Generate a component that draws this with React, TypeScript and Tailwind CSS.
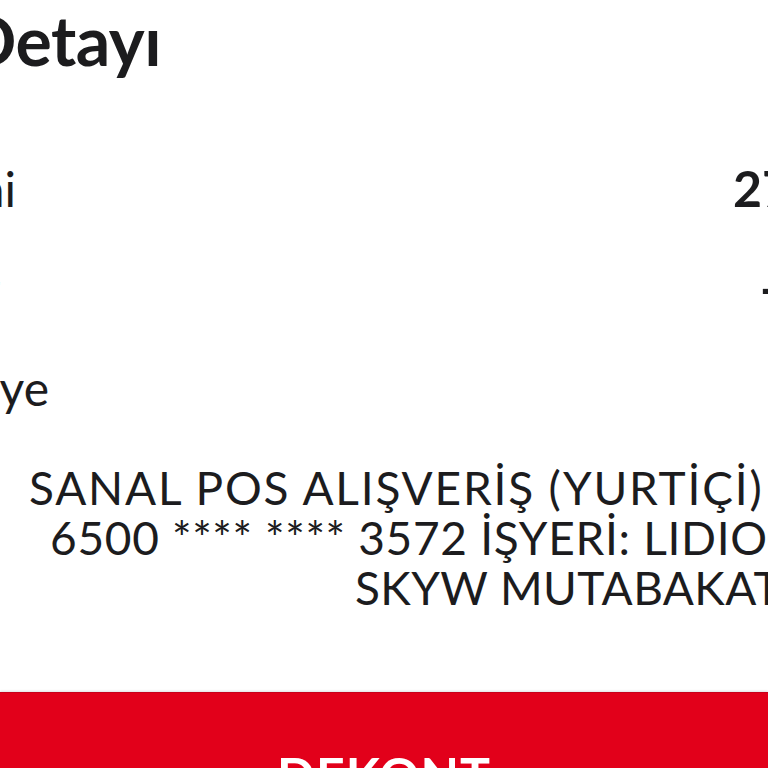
const ROWS = [
    { label: "İşlem Tarihi", value: "27.05.2024", labelBox: "w-[16px]", valueBox: "ml-[717px]" },
    { label: "Tutar", value: "-1.250,00 TL", labelBox: "w-0", valueBox: "ml-[760px]" },
    { label: "Harcama Türü: Hediye", value: "", labelBox: "w-[49px]", valueBox: "ml-auto" },
];

export default function App() {
    return (
        <div className="w-[768px] h-[768px] overflow-hidden bg-white text-[#1c1c1e] font-['Lato',sans-serif] flex flex-col">
            <div className="w-[161px] h-[80px] flex justify-end whitespace-nowrap">
                <h1 className="text-[68px] leading-[80px] font-bold tracking-[-0.5px]">İşlem Detayı</h1>
            </div>

            <div className="mt-[58px] flex flex-col">
                {ROWS.map((row) => (
                    <div key={row.label} className="h-[100px] flex items-baseline whitespace-nowrap leading-[100px]">
                        <div className={`${row.labelBox} shrink-0 flex justify-end`}>
                            <span className="text-[48px]">{row.label}</span>
                        </div>
                        <span className={`${row.valueBox} text-[50px] font-bold`}>{row.value}</span>
                    </div>
                ))}
            </div>

            <div className="mt-[25px] flex flex-col text-[46px] leading-[50px] whitespace-nowrap">
                <p className="pl-[29px] tracking-[1.8px]">SANAL POS ALIŞVERİŞ (YURTİÇİ)</p>
                <p className="pl-[50px] tracking-[0.7px]">
                    6500 <span className="tracking-[0.6px]">****</span> <span className="tracking-[0.6px]">****</span> 3572 İŞYERİ: LIDIO*YEMEKSEPETI
                </p>
                <p className="pl-[355px] tracking-[0.4px]">SKYW MUTABAKATI</p>
            </div>

            <button className="mt-[79px] h-[120px] shrink-0 bg-[#e2001a] border-t border-[#c8001a] shadow-[0_-1px_2px_rgba(0,0,0,0.12)] flex justify-center pt-[52px]">
                <span className="text-[50px] leading-[60px] font-bold text-white tracking-[1px]">DEKONT</span>
            </button>
        </div>
    );
}
